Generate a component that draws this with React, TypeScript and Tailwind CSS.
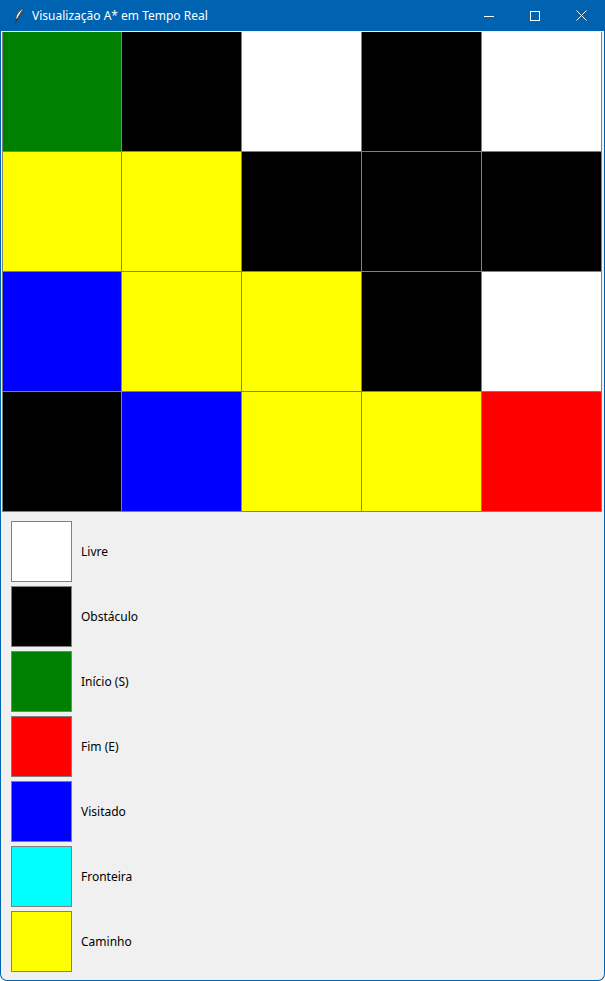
import React from "react";

const GRID: string[][] = [
  ["bg-[#008000]", "bg-black", "bg-white", "bg-black", "bg-white"],
  ["bg-[#ffff00]", "bg-[#ffff00]", "bg-black", "bg-black", "bg-black"],
  ["bg-[#0000ff]", "bg-[#ffff00]", "bg-[#ffff00]", "bg-black", "bg-white"],
  ["bg-black", "bg-[#0000ff]", "bg-[#ffff00]", "bg-[#ffff00]", "bg-[#ff0000]"],
];

const LEGEND = [
  { label: "Livre", color: "bg-white" },
  { label: "Obstáculo", color: "bg-black" },
  { label: "Início (S)", color: "bg-[#008000]" },
  { label: "Fim (E)", color: "bg-[#ff0000]" },
  { label: "Visitado", color: "bg-[#0000ff]" },
  { label: "Fronteira", color: "bg-[#00ffff]" },
  { label: "Caminho", color: "bg-[#ffff00]" },
];

function Feather() {
  return (
    <svg width="12" height="16" viewBox="0 0 12 16" fill="none">
      <path d="M10.5 0.8 C6.5 2 3.2 6 2.6 11.2 L4.2 11 C6.5 8.8 9.4 5 10.5 0.8 Z" fill="#e8e8e8" stroke="#333" strokeWidth="0.8" />
      <path d="M9.2 2.6 L2 15.2" stroke="#333" strokeWidth="1" />
    </svg>
  );
}

function TitleBar() {
  return (
    <div className="flex h-[31px] shrink-0 items-center bg-[#0063b1] text-white">
      <div className="flex w-[31px] justify-center pl-[4px]">
        <Feather />
      </div>
      <span className="text-[12px]">Visualização A* em Tempo Real</span>
      <div className="ml-auto flex h-full">
        <button className="grid h-full w-[46px] place-items-center">
          <svg width="10" height="10" viewBox="0 0 10 10">
            <path d="M0 5.5 H10" stroke="white" strokeWidth="1" />
          </svg>
        </button>
        <button className="grid h-full w-[46px] place-items-center">
          <svg width="10" height="10" viewBox="0 0 10 10">
            <rect x="0.5" y="0.5" width="9" height="9" fill="none" stroke="white" strokeWidth="1" />
          </svg>
        </button>
        <button className="grid h-full w-[46px] place-items-center">
          <svg width="11" height="11" viewBox="0 0 11 11">
            <path d="M0.5 0.5 L10.5 10.5 M10.5 0.5 L0.5 10.5" stroke="white" strokeWidth="1" />
          </svg>
        </button>
      </div>
    </div>
  );
}

export default function App() {
  return (
    <div
      className="flex h-[981px] w-[605px] flex-col overflow-hidden rounded-b-[7px] border-x border-b border-[#0063b1] bg-[#f0f0f0]"
      style={{ fontFamily: '"Segoe UI", "Noto Sans", "Liberation Sans", sans-serif' }}
    >
      <TitleBar />

      {/* Canvas da grade */}
      <div className="pl-px pt-px">
        <div className="grid w-[600px] grid-cols-[119px_120px_120px_120px_120px] border-l border-[#808080]">
          {GRID.flatMap((row, r) =>
            row.map((c, i) => (
              <div key={`${r}-${i}`} className={`h-[120px] border-r border-b border-[#808080] ${c}`} />
            ))
          )}
        </div>
      </div>

      {/* Legenda */}
      <div className="flex flex-col gap-[4px] pl-[10px] pt-[9px]">
        {LEGEND.map((item) => (
          <div key={item.label} className="flex items-center">
            <div className={`h-[61px] w-[61px] border border-[#808080] ${item.color}`} />
            <span className="ml-[9px] text-[12px] text-black">{item.label}</span>
          </div>
        ))}
      </div>
    </div>
  );
}
